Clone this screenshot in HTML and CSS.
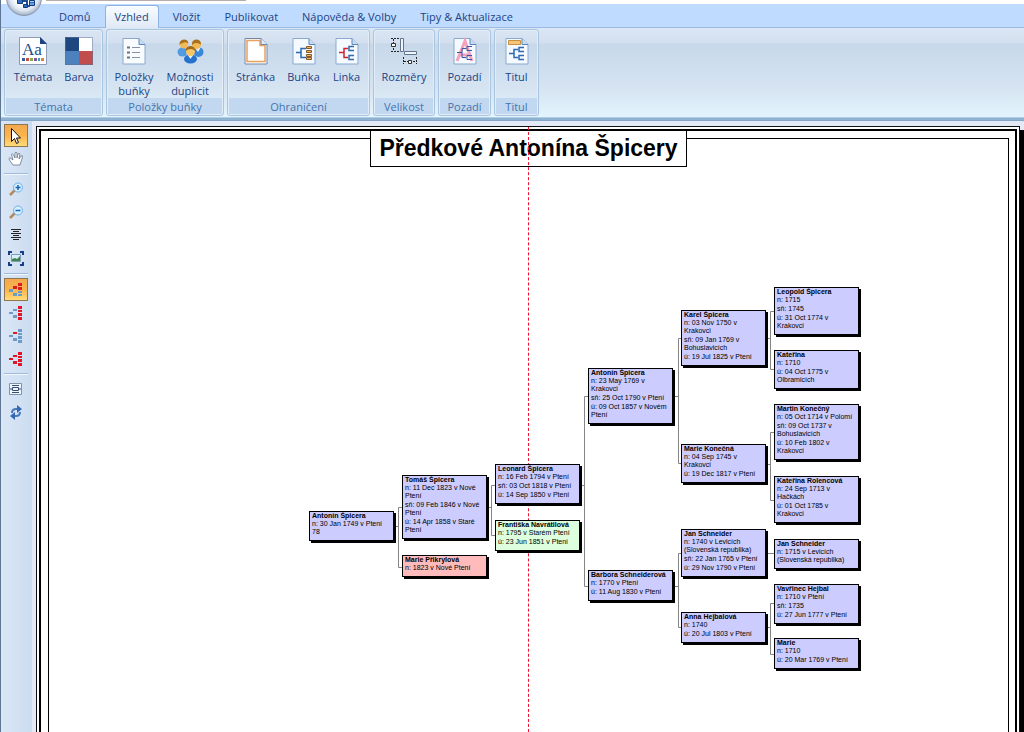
FILE: index.html
```html
<!DOCTYPE html>
<html lang="cs">
<head>
<meta charset="utf-8">
<title>Předkové Antonína Špicery</title>
<link rel="stylesheet" href="styles.css">
</head>
<body>
<div class="app">
  <header class="ribbon">
    <div class="titlebar"><div class="titlebar-line"></div></div>
    <button class="office" aria-label="Menu">
      <svg width="36" height="36" viewBox="0 0 36 36"><path d="M13 21h8M21 17v10M21 17h3M21 26h3" stroke="#1d4f9c" stroke-width="2" fill="none"/><path d="M11.500 18.500h5v5h-5zM17.500 24.500h4v3h-4zM23.500 14.500h5v4h-5zM23.500 20.500h5v5h-5z" fill="#2f6cc0" stroke="#123a7c"/><path d="M12 19.500h3M24 21.500h4M24 24h4" stroke="#a8d4ff"/></svg>
    </button>
    <nav class="tabs">
      <button class="tab">Domů</button>
      <button class="tab active">Vzhled</button>
      <button class="tab">Vložit</button>
      <button class="tab">Publikovat</button>
      <button class="tab">Nápověda &amp; Volby</button>
      <button class="tab">Tipy &amp; Aktualizace</button>
    </nav>
    <div class="groups">
      <section class="group g-themes">
        <div class="tools">
          <button class="tool"><svg width="28" height="28" viewBox="0 0 28 28"><path d="M.5.500h21l6 6v21H.5z" fill="#fff" stroke="#8b9cb8"/><path d="M21 0v7h7z" fill="#1f4484"/><text x="3" y="18" class="icon-aa">Aa</text><path d="M3 21h3v3H3z" fill="#355d96"/><path d="M7 21h3v3H7z" fill="#c34d47"/><path d="M11 21h3v3h-3z" fill="#8daa46"/><path d="M15 21h3v3h-3z" fill="#7e55a0"/><path d="M19 21h2v3h-2z" fill="#389eb9"/><path d="M22 21h3v3h-3z" fill="#e18434"/></svg>Témata</button>
          <button class="tool"><svg width="28" height="28" viewBox="0 0 28 28"><path d="M0 0h14v14H0z" fill="#1f477f"/><path d="M14 0h14v14H14z" fill="#fff"/><path d="M0 14h14v14H0z" fill="#4d81be"/><path d="M14 14h14v14H14z" fill="#c24e4b"/><path d="M.5.500h27v27H.5z" fill="none" stroke="#5c7297" stroke-opacity=".6"/></svg>Barva</button>
        </div>
        <h2>Témata</h2>
      </section>
      <section class="group g-items">
        <div class="tools">
          <button class="tool t50"><svg width="28" height="28" viewBox="0 0 28 28"><path d="M3 1.500h16l6 6V27H3z" fill="#f8fcff" stroke="#8aa9cf"/><path d="M19 1.500v6h6" fill="#c5dcf5" stroke="#5d86b8"/><path d="M7 10.500h3M7 15.500h3M7 20.500h3" stroke="#6b7280" stroke-width="2"/><path d="M12 10.500h8M12 15.500h8M12 20.500h8" stroke="#8793a3"/></svg>Položky<br>buňky</button>
          <button class="tool t62"><svg width="28" height="28" viewBox="0 0 28 28"><ellipse cx="6.500" cy="15" rx="5" ry="4.500" fill="#4f9be4"/><ellipse cx="22.500" cy="15" rx="5" ry="5" fill="#3a86d8"/><path d="M19 11l3 4 3-5" fill="#e7f3ff"/><circle cx="8" cy="7.500" r="4" fill="#f2ba55"/><circle cx="20.500" cy="7.500" r="4.500" fill="#f2ba55"/><path d="M3.500 8Q3 3 8 2.500q4 0 4.500 4Q9 4.500 7 6q-2 0-3.500 2zM16 8q-.5-5 4-5.500 5 0 5 5-3-2-5-1.500-2 0-4 2z" fill="#a9711d"/><ellipse cx="14.500" cy="22" rx="6.500" ry="4.500" fill="#2472cd"/><path d="M11 17l3.500 5 3.500-5" fill="#e7f3ff"/><circle cx="14.500" cy="14.500" r="4.500" fill="#f7c562"/><path d="M9.500 14Q10 9 15 9q4 .500 4.500 5-3-2.500-5-2-2 0-5 2z" fill="#a26a18"/></svg>Možnosti<br>duplicit</button>
        </div>
        <h2>Položky buňky</h2>
      </section>
      <section class="group g-borders">
        <div class="tools">
          <button class="tool t50"><svg width="28" height="28" viewBox="0 0 28 28"><path d="M3 1.500h16l6 6V27H3z" fill="#fff" stroke="#7188a8"/><path d="M5 3.500h13v5h5v16H5z" fill="#fff" stroke="#e9a05c" stroke-width="1.500"/><path d="M19 1.500v6h6" fill="#e0ecf8" stroke="#7188a8"/></svg>Stránka</button>
          <button class="tool"><svg width="28" height="28" viewBox="0 0 28 28"><path d="M3 1.500h16l6 6V27H3z" fill="#f4faff" stroke="#8aa9cf"/><path d="M19 1.500v6h6" fill="#c5dcf5" stroke="#5d86b8"/><path d="M6 15.500h5M16 11.500h-5v9h5" fill="none" stroke="#2767b2" stroke-width="1.500"/><path d="M16.500 9.500h5v2h-5zM16.500 13.500h5v2h-5zM16.500 17.500h5v2h-5zM16.500 20.500h5v2h-5z" fill="#f0b45f" stroke="#85592b"/></svg>Buňka</button>
          <button class="tool t40"><svg width="28" height="28" viewBox="0 0 28 28"><path d="M3 1.500h16l6 6V27H3z" fill="#f4faff" stroke="#8aa9cf"/><path d="M19 1.500v6h6" fill="#c5dcf5" stroke="#5d86b8"/><path d="M6 15.500h5M15 11.500h-4v9h4" fill="none" stroke="#d52033" stroke-width="1.500"/><path d="M21 9.500h-5v4h5M21 18.500h-5v4h5" fill="none" stroke="#3667a6" stroke-width="1.500"/></svg>Linka</button>
        </div>
        <h2>Ohraničení</h2>
      </section>
      <section class="group g-size">
        <div class="tools">
          <button class="tool t56"><svg width="28" height="28" viewBox="0 0 28 28"><path d="M1 1.500h8M1 14.500h8M3.500 2v12" stroke="#222" stroke-dasharray="2 1"/><path d="M1.500 6.500h4v3h-4z" fill="#fff" stroke="#333"/><path d="M10.500 1.500h3v13h-3zM14.500 14.500h12v3h-12z" fill="#eef5fb" stroke="#62738c"/><path d="M13.500 20v7M26.500 20v7M14 24.500h12" stroke="#222" stroke-dasharray="2 1"/><path d="M18.500 23.500h3v3h-3z" fill="#fff" stroke="#333"/></svg>Rozměry</button>
        </div>
        <h2>Velikost</h2>
      </section>
      <section class="group g-back">
        <div class="tools">
          <button class="tool"><svg width="28" height="28" viewBox="0 0 28 28"><path d="M3 1.500h16l6 6V27H3z" fill="#f4faff" stroke="#8aa9cf"/><path d="M6 24L14 4l7 20M8 18h11" stroke="#f5a0bd" stroke-width="3" fill="none"/><path d="M19 1.500v6h6" fill="#c5dcf5" stroke="#5d86b8"/><path d="M6 15.500h5M15 11.500h-4v9h4M21 9.500h-5v4h5M21 18.500h-5v4h5" fill="none" stroke="#3459a6"/></svg>Pozadí</button>
        </div>
        <h2>Pozadí</h2>
      </section>
      <section class="group g-title">
        <div class="tools">
          <button class="tool t40"><svg width="28" height="28" viewBox="0 0 28 28"><path d="M3 1.500h16l6 6V27H3z" fill="#f4faff" stroke="#8aa9cf"/><path d="M19 1.500v6h6" fill="#c5dcf5" stroke="#5d86b8"/><path d="M5.500 3.500h12v4h-12z" fill="#f3c67c" stroke="#c98e3e"/><path d="M6 16.500h5M15 12.500h-4v8h4M21 10.500h-5v4h5M21 18.500h-5v4h5" fill="none" stroke="#2f68b2" stroke-width="1.500"/></svg>Titul</button>
        </div>
        <h2>Titul</h2>
      </section>
    </div>
  </header>

  <div class="workspace">
    <aside class="sidebar">
      <button class="side on" aria-label="Výběr"><svg width="16" height="16" viewBox="0 0 16 16"><path d="M3.500.500v13l3-3 2 5 2-1-2-4.500h4z" fill="#fff" stroke="#111"/></svg></button>
      <button class="side" aria-label="Posun"><svg width="16" height="16" viewBox="0 0 16 16"><path d="M5 14Q1 9 1 7.500t2 0L5 9 3.500 3.500Q4 1.500 5.500 4L7 7V2q1-2 2 0v5l1-4q1-1.500 2 0L11 8l2-3q2-1 1.500 1L12 14z" fill="#fff" stroke="#667489" stroke-width=".8"/></svg></button>
      <hr>
      <button class="side" aria-label="Přiblížit"><svg width="16" height="16" viewBox="0 0 16 16"><path d="M7 8l-5 5" stroke="#b18a60" stroke-width="2.500"/><circle cx="10" cy="5.500" r="4.500" fill="#d6efff" stroke="#72b0e4"/><path d="M10 3v5M7.500 5.500h5" stroke="#1566b5" stroke-width="1.500"/></svg></button>
      <button class="side" aria-label="Oddálit"><svg width="16" height="16" viewBox="0 0 16 16"><path d="M7 8l-5 5" stroke="#b18a60" stroke-width="2.500"/><circle cx="10" cy="5.500" r="4.500" fill="#d6efff" stroke="#72b0e4"/><path d="M7.500 5.500h5" stroke="#1566b5" stroke-width="1.500"/></svg></button>
      <button class="side" aria-label="Na střed"><svg width="16" height="16" viewBox="0 0 16 16"><path d="M3 1.500h10M5 3.500h6M3 5.500h10M5 7.500h6M3 9.500h10M5 11.500h6" stroke="#222"/></svg></button>
      <button class="side" aria-label="Celá stránka"><svg width="16" height="16" viewBox="0 0 16 16"><path d="M1 4V1h3M12 1h3v3M15 11v3h-3M4 14H1v-3" fill="none" stroke="#173f87" stroke-width="2"/><path d="M3.500 3.500h9v7h-9z" fill="#d8f0ff" stroke="#7e9cbc"/><path d="M4 10V8l3-1 2 1 3-3v5z" fill="#418447"/></svg></button>
      <hr>
      <button class="side on" aria-label="Předkové a potomci"><svg width="16" height="16" viewBox="0 0 16 16"><path d="M1 7h4v3H1zM5 11h4v3H5zM10 9h4v2h-4zM10 12h4v2h-4z" fill="#6c9bc8"/><path d="M5 4h4v3H5zM10 1h4v3h-4zM10 5h4v3h-4z" fill="#d91f22"/></svg></button>
      <button class="side" aria-label="Generace"><svg width="16" height="16" viewBox="0 0 16 16"><path d="M1 7h4v2H1zM5 4h4v2H5zM5 10h4v3H5z" fill="#6c9bc8"/><path d="M10 1h4v3h-4zM10 5h4v2h-4zM10 8h4v3h-4zM10 12h4v3h-4z" fill="#e21428"/></svg></button>
      <button class="side" aria-label="Osoba"><svg width="16" height="16" viewBox="0 0 16 16"><path d="M1 7h4v2H1zM5 10h4v3H5zM10 1h4v3h-4zM10 5h4v2h-4zM10 8h4v3h-4zM10 12h4v3h-4z" fill="#6c9bc8"/><path d="M5 4h4v2H5z" fill="#d91f22"/></svg></button>
      <button class="side" aria-label="Všichni"><svg width="16" height="16" viewBox="0 0 16 16"><path d="M1 7h4v2H1zM5 4h4v2H5zM5 10h4v3H5zM10 1h4v3h-4zM10 5h4v2h-4zM10 8h4v3h-4zM10 12h4v3h-4z" fill="#e21428"/></svg></button>
      <hr>
      <button class="side" aria-label="Rozložení"><svg width="16" height="16" viewBox="0 0 16 16"><path d="M1.500 1.500h12v11h-12z" fill="#edf5ff" stroke="#7f93ad"/><path d="M4 3.500h7M4 10.500h7M4.500 5.500h6v3h-6zM2 7h2M11 7h2" fill="none" stroke="#394e73"/></svg></button>
      <button class="side" aria-label="Obnovit"><svg width="16" height="16" viewBox="0 0 16 16"><path d="M11 4H8Q4 4 4 8M5 11h3q4 0 4-4" fill="none" stroke="#4779bd" stroke-width="2"/><path d="M9 0l5 4-5 4zM7 7v8l-5-4z" fill="#3468b3"/></svg></button>
    </aside>

    <main class="paper">
      <div class="frame">
        <div class="sheet">
          <h1>Předkové Antonína Špicery</h1>
        </div>
      </div>
      <div class="midline"></div>
      <div class="chart">
        <svg class="links" width="984" height="606" viewBox="36 126 984 606">
          <path d="M396 526.500h2.500M402 507.500h-3.500v60h3.500M489 507.500h2.500M495 485.500h-3.500v50h3.500M582 485.500h2.500M588 396.500h-3.500v190h3.500M675 396.500h3.500M681 338.500h-2.500v125h2.500M675 586.500h3.500M681 553.500h-2.500v74h2.500M768 338.500h2.500M774 311.500h-3.500v58h3.500M768 464.500h2.500M774 432.500h-3.500v68h3.500M768 553.500h6M768 627.500h2.500M774 603.500h-3.500v51h3.500"/>
        </svg>
        <article class="node c1 n-antonin78"><h3>Antonín Špicera</h3><p>n: 30 Jan 1749 v Ptení<br>78</p></article>
        <article class="node c2 n-tomas"><h3>Tomáš Špicera</h3><p>n: 11 Dec 1823 v Nové<br>Ptení</p><p>sň: 09 Feb 1846 v Nové<br>Ptení</p><p>ú: 14 Apr 1858 v Staré<br>Ptení</p></article>
        <article class="node c2 n-prikrylova red"><h3>Marie Přikrylová</h3><p>n: 1823 v Nové Ptení</p></article>
        <article class="node c3 n-leonard"><h3>Leonard Špicera</h3><p>n: 16 Feb 1794 v Ptení</p><p>sň: 03 Oct 1818 v Ptení</p><p>ú: 14 Sep 1850 v Ptení</p></article>
        <article class="node c3 n-frantiska green"><h3>Františka Navrátilová</h3><p>n: 1795 v Starém Ptení</p><p>ú: 23 Jun 1851 v Ptení</p></article>
        <article class="node c4 n-antonin"><h3>Antonín Špicera</h3><p>n: 23 May 1769 v<br>Krakovci</p><p>sň: 25 Oct 1790 v Ptení</p><p>ú: 09 Oct 1857 v Novém<br>Ptení</p></article>
        <article class="node c4 n-barbora"><h3>Barbora Schneiderová</h3><p>n: 1770 v Ptení</p><p>ú: 11 Aug 1830 v Ptení</p></article>
        <article class="node c5 n-karel"><h3>Karel Špicera</h3><p>n: 03 Nov 1750 v<br>Krakovci</p><p>sň: 09 Jan 1769 v<br>Bohuslavicích</p><p>ú: 19 Jul 1825 v Ptení</p></article>
        <article class="node c5 n-konecna"><h3>Marie Konečná</h3><p>n: 04 Sep 1745 v<br>Krakovci</p><p>ú: 19 Dec 1817 v Ptení</p></article>
        <article class="node c5 n-jan"><h3>Jan Schneider</h3><p>n: 1740 v Levicích<br>(Slovenská republika)</p><p>sň: 22 Jan 1765 v Ptení</p><p>ú: 29 Nov 1790 v Ptení</p></article>
        <article class="node c5 n-anna"><h3>Anna Hejbalová</h3><p>n: 1740</p><p>ú: 20 Jul 1803 v Ptení</p></article>
        <article class="node c6 n-leopold"><h3>Leopold Špicera</h3><p>n: 1715</p><p>sň: 1745</p><p>ú: 31 Oct 1774 v<br>Krakovci</p></article>
        <article class="node c6 n-katerina"><h3>Kateřina</h3><p>n: 1710</p><p>ú: 04 Oct 1775 v<br>Olbramicích</p></article>
        <article class="node c6 n-martin"><h3>Martin Konečný</h3><p>n: 05 Oct 1714 v Polomí</p><p>sň: 09 Oct 1737 v<br>Bohuslavicích</p><p>ú: 10 Feb 1802 v<br>Krakovci</p></article>
        <article class="node c6 n-rolencova"><h3>Kateřina Rolencová</h3><p>n: 24 Sep 1713 v<br>Hačkách</p><p>ú: 01 Oct 1785 v<br>Krakovci</p></article>
        <article class="node c6 n-jan1715"><h3>Jan Schneider</h3><p>n: 1715 v Levicích<br>(Slovenská republika)</p></article>
        <article class="node c6 n-vavrinec"><h3>Vavřinec Hejbal</h3><p>n: 1710 v Ptení</p><p>sň: 1735</p><p>ú: 27 Jun 1777 v Ptení</p></article>
        <article class="node c6 n-marie"><h3>Marie</h3><p>n: 1710</p><p>ú: 20 Mar 1769 v Ptení</p></article>
      </div>
    </main>
  </div>
</div>
</body>
</html>
```
FILE: styles.css
```css
* { box-sizing: border-box; }
body, h1, h2, h3, p { margin: 0; }
button { border: 0; padding: 0; background: none; font: inherit; color: inherit; }
body { font-family: "Open Sans", "Noto Sans", sans-serif; font-size: 11px; color: #1c4485; background: #e4e9f6; }
.app { min-height: 100vh; display: flex; flex-direction: column; border-left: 1px solid #5e7594; overflow: hidden; }

/* Ribbon */
.ribbon { position: relative; }
.titlebar { height: 4px; background: #fff; padding-left: 45px; }
.titlebar-line { width: 200px; height: 1px; background: #b5acb0; }
.office { position: absolute; left: 5px; top: -20px; width: 36px; height: 36px; border-radius: 50%; border: 1px solid #8996aa; background: radial-gradient(circle at 50% 45%, #fff 35%, #dbe3ef 58%, #a9b8cd 72%); overflow: hidden; z-index: 2; display: flex; align-items: center; justify-content: center; }
.office svg { flex: none; }
.tabs { display: flex; height: 24px; background: #bfdbff; border-bottom: 1px solid #9dbbe2; padding: 1px 0 0 46px; }
.tab { height: 23px; padding: 0 12px; white-space: nowrap; line-height: 22px; }
.tab.active { margin: 0 2px; background: linear-gradient(#f8fcff, #dfe9f6); border: 1px solid #8db2e3; border-bottom: 0; border-radius: 3px 3px 0 0; padding: 0 9px; }
.groups { display: flex; gap: 3px; height: 93px; padding: 1px 0 3px 3px; background: linear-gradient(#dce7f5 0, #d3dfef 15px, #c7d8ea 16px, #d6e4f2 60px, #e2f4fd 89px, #7fa9cb 90px, #98b9d8 91px, #7f9fc0 93px); }
.group { height: 87px; border: 1px solid #a9c5df; border-radius: 3px; box-shadow: inset 0 0 0 1px #e3edf8; display: flex; flex-direction: column; }
.tools { flex: 1; display: flex; justify-content: center; padding-top: 7px; }
.group h2 { height: 16px; margin: 0 1px 1px; font-size: 11px; font-weight: 400; line-height: 17px; text-align: center; color: #4474ae; background: #c2d8f0; }
.tool { width: 46px; display: flex; flex-direction: column; align-items: center; justify-content: flex-start; line-height: 14px; text-align: center; }
.tool svg { margin-bottom: 5px; }
.icon-aa { font: 17px "Liberation Serif", serif; fill: #1f4f8c; }
.t40 { width: 40px; }
.t50 { width: 50px; }
.t56 { width: 56px; }
.t62 { width: 62px; }
.g-themes { width: 99px; }
.g-themes .tools { padding-left: 5px; }
.g-items { width: 118px; }
.g-borders { width: 143px; }
.g-size { width: 62px; }
.g-back { width: 53px; }
.g-title { width: 45px; }

/* Sidebar */
.workspace { flex: 1; display: flex; }
.sidebar { width: 31px; padding: 3px 4px 0 3px; display: flex; flex-direction: column; background: linear-gradient(90deg, #dbe7f6, #cbdcf0); }
.side { width: 24px; height: 23px; display: flex; align-items: center; justify-content: center; }
.side svg { margin-right: 1px; }
.side.on { border: 1px solid #8e7650; background: linear-gradient(#f2a84f, #fbb44c 50%, #ffdc79); }
.sidebar hr { width: 24px; height: 8px; margin: 0; border: 0; background: linear-gradient(transparent 3px, #9fbbdc 3px, #9fbbdc 4px, #f3f8fe 4px, #f3f8fe 5px, transparent 5px); }

/* Printed page */
.paper { position: relative; flex: 1; margin: 5px 4px 0 4px; padding: 2px 2px 0; display: flex; flex-direction: column; background: #fff; border: 1px solid #111; border-bottom: 0; box-shadow: 4px 4px 0 #000; min-height: 606px; }
.frame { flex: 1; display: flex; border: 2px solid #000; border-bottom: 0; padding: 7px 6px 0 7px; }
.sheet { flex: 1; border: 1px solid #000; border-bottom: 0; display: flex; justify-content: center; align-items: flex-start; }
h1 { margin-top: -9px; padding: 0 8px; height: 37px; border: 1px solid #000; background: #fff; color: #000; font: bold 23px/35px "Liberation Sans", Arial, sans-serif; white-space: nowrap; }
.midline { position: absolute; left: 50%; top: 0; bottom: 0; border-left: 1px dashed #f01430; }

/* Family chart */
.chart { position: absolute; left: -1px; top: -1px; right: 0; bottom: 0; }
.links { position: absolute; left: 0; top: 0; fill: none; stroke: #858585; }
.node { position: absolute; width: 85px; padding: 0 0 4px 2px; border: 1px solid #000; background: #ccf; box-shadow: 2px 2px 0 #000; color: #000; font: 7px/8px "Liberation Sans", Arial, sans-serif; white-space: nowrap; }
.node h3 { font-size: 7px; line-height: 8px; }
.node p + p { margin-top: 1px; }
.red { background: #fbb; }
.green { background: #dfd; }
.c1 { left: 273px; }
.c2 { left: 366px; }
.c3 { left: 459px; }
.c4 { left: 552px; }
.c5 { left: 645px; }
.c6 { left: 738px; }
.n-antonin78 { top: 385px; }
.n-tomas { top: 349px; }
.n-prikrylova { top: 429px; }
.n-leonard { top: 338px; }
.n-frantiska { top: 394px; }
.n-antonin { top: 242px; }
.n-barbora { top: 444px; }
.n-karel { top: 184px; }
.n-konecna { top: 318px; }
.n-jan { top: 403px; }
.n-anna { top: 486px; }
.n-leopold { top: 161px; }
.n-katerina { top: 224px; }
.n-martin { top: 278px; }
.n-rolencova { top: 350px; }
.n-jan1715 { top: 413px; }
.n-vavrinec { top: 458px; }
.n-marie { top: 512px; }
```
